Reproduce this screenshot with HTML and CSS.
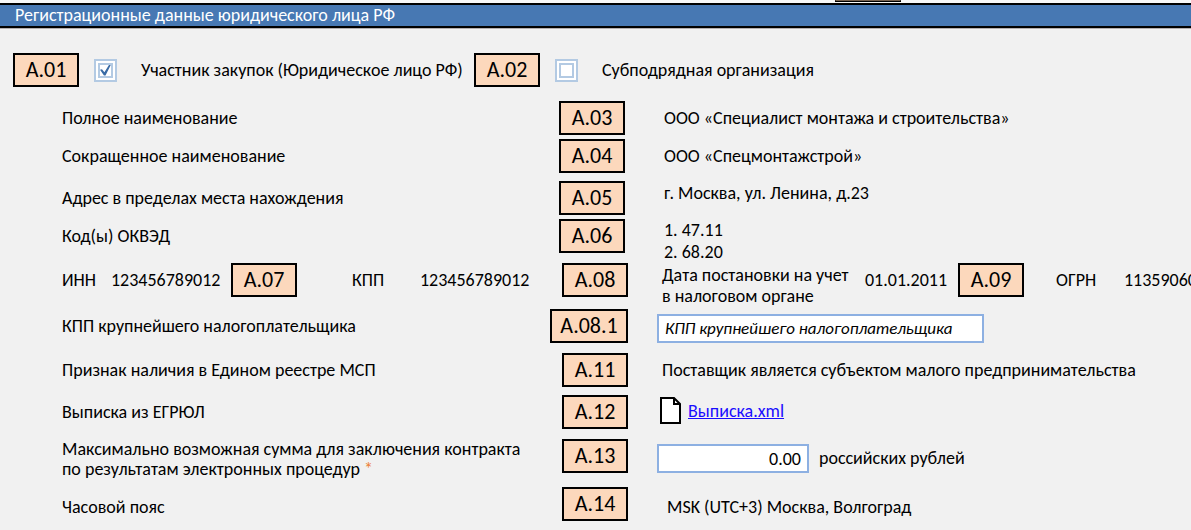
FILE: index.html
```html
<!DOCTYPE html>
<html lang="ru">
<head>
<meta charset="utf-8">
<title>Регистрационные данные юридического лица РФ</title>
<link rel="stylesheet" href="styles.css">
</head>
<body>
<div class="strip"><span class="strip-box"></span></div>
<h1 class="bar">Регистрационные данные юридического лица РФ</h1>
<main class="form">
  <div class="roles">
    <span class="badge">А.01</span>
    <span class="tick"><input type="checkbox" id="buyer" checked></span>
    <label class="role-first" for="buyer">Участник закупок (Юридическое лицо РФ)</label>
    <span class="badge">А.02</span>
    <span class="tick"><input type="checkbox" id="sub"></span>
    <label for="sub">Субподрядная организация</label>
  </div>

  <section class="group names">
    <div class="row">
      <span>Полное наименование</span>
      <span class="badge">А.03</span>
      <span>ООО «Специалист монтажа и строительства»</span>
    </div>
    <div class="row gap-s">
      <span>Сокращенное наименование</span>
      <span class="badge">А.04</span>
      <span>ООО «Спецмонтажстрой»</span>
    </div>
    <div class="row gap-m">
      <span>Адрес в пределах места нахождения</span>
      <span class="badge">А.05</span>
      <span class="address">г. Москва, ул. Ленина, д.23</span>
    </div>
    <div class="row gap-s">
      <span>Код(ы) ОКВЭД</span>
      <span class="badge">А.06</span>
      <span class="lines">1. 47.11<br>2. 68.20</span>
    </div>
  </section>

  <section class="group tax">
    <div class="row">
      <div class="codes">
        <span>ИНН</span><span>123456789012</span><span class="badge">А.07</span><span>КПП</span><span>123456789012</span>
      </div>
      <span class="badge">А.08</span>
      <div class="dates">
        <span class="date-label">Дата постановки на учет<br>в налоговом органе</span><span>01.01.2011</span><span class="badge">А.09</span><span>ОГРН</span><span>113590600</span>
      </div>
    </div>
    <div class="row gap-xs">
      <label for="kpp">КПП крупнейшего налогоплательщика</label>
      <span class="badge badge-wide">А.08.1</span>
      <span class="field"><input class="box box-kpp" id="kpp" type="text" value="КПП крупнейшего налогоплательщика"></span>
    </div>
    <div class="row gap-l">
      <span>Признак наличия в Едином реестре МСП</span>
      <span class="badge">А.11</span>
      <span>Поставщик является субъектом малого предпринимательства</span>
    </div>
    <div class="row gap-m">
      <span>Выписка из ЕГРЮЛ</span>
      <span class="badge">А.12</span>
      <span class="file">
        <svg width="21" height="27" viewBox="0 0 21 27" aria-hidden="true"><path d="M1 1H14L20 7V26H1Z" fill="#fff" stroke="#000" stroke-width="2"/><path d="M14 1V7H20" fill="none" stroke="#000" stroke-width="2"/></svg>
        <a href="#">Выписка.xml</a>
      </span>
    </div>
    <div class="row gap-l">
      <label class="sum-label" for="sum">Максимально возможная сумма для заключения контракта<br>по результатам электронных процедур <span class="star">*</span></label>
      <span class="badge">А.13</span>
      <span class="field"><input class="box box-sum" id="sum" type="text" value="0.00"><span>российских рублей</span></span>
    </div>
    <div class="row gap-m zone">
      <span>Часовой пояс</span>
      <span class="badge">А.14</span>
      <span>MSK (UTC+3) Москва, Волгоград</span>
    </div>
  </section>
</main>
</body>
</html>
```
FILE: styles.css
```css
* { box-sizing: border-box; }

body {
  margin: 0;
  background: #f1f1f1;
  color: #000;
  font: 18px/34px Carlito, Lato, "Noto Sans", sans-serif;
  white-space: nowrap;
  overflow-x: hidden;
}

.strip {
  height: 3px;
  padding-left: 835px;
  background: #f8f8f8;
}

.strip-box {
  display: block;
  width: 66px;
  height: 2px;
  border: 1px solid #000;
  border-top-color: #75604e;
}

.bar {
  margin: 0;
  padding-left: 15px;
  border: solid #000;
  border-width: 2px 0;
  box-shadow: 0 1px #b5b0b0;
  background: #4778b3;
  color: #fff;
  font-size: 18px;
  font-weight: 400;
  line-height: 21px;
}

.form { padding: 25px 0 0; }

.badge {
  flex: none;
  width: 66px;
  height: 34px;
  border: 2px solid #000;
  background: #fcd8bc;
  font-size: 22px;
  line-height: 30px;
  text-align: center;
}

.badge-wide { width: 78px; }

.roles {
  display: flex;
  align-items: center;
  padding-left: 13px;
}

.tick {
  display: flex;
  margin: 0 24px 0 15px;
  padding: 2px;
  border: 2px solid #b3cae3;
  background: #fff;
}

.role-first { width: 333px; }

.tick input {
  appearance: none;
  width: 15px;
  height: 15px;
  margin: 0;
  border: 2px solid #b3cae3;
  background: #fff;
}

.tick input:checked::before {
  content: "";
  display: block;
  width: 11px;
  height: 11px;
  background: #396ba5;
  clip-path: polygon(0 48%, 18% 44%, 40% 70%, 84% 0, 100% 0, 50% 100%, 36% 100%);
}

.group { padding-left: 62px; }

.names { padding-top: 14px; }

.row {
  display: grid;
  align-items: start;
}

.names .row { grid-template-columns: 497px 66px 1fr; }
.names .row > :last-child { padding-left: 39px; }

.tax .row { grid-template-columns: 488px 78px 1fr; }
.tax .badge { justify-self: end; }
.tax .row > :last-child { padding-left: 34px; }

.gap-xs { margin-top: 2px; }
.gap-s { margin-top: 4px; }
.gap-m { margin-top: 8px; }
.gap-l { margin-top: 10px; }

.address { line-height: 24px; }
.lines { line-height: 22px; }
.sum-label { line-height: 20px; }

.date-label {
  padding-top: 2px;
  line-height: 21px;
}

.codes { display: grid; grid-template-columns: 49px 120px 121px 68px 1fr; }
.dates { display: grid; grid-template-columns: 203px 93px 98px 68px 1fr; }
.codes .badge, .dates .badge { justify-self: start; }

.field {
  display: flex;
  align-items: center;
  gap: 10px;
  padding-top: 5px;
  line-height: 29px;
}

.tax .row > .field { padding-left: 29px; }

.box {
  height: 29px;
  padding: 0 6px;
  border: 2px solid #8db0e2;
  border-radius: 0;
  background: #fff;
  color: #000;
  font: inherit;
  line-height: 25px;
}

.box-kpp {
  width: 327px;
  font-size: 17px;
  font-style: italic;
}

.box-sum {
  width: 152px;
  text-align: right;
}

.file {
  display: flex;
  align-items: center;
  gap: 7px;
  height: 31px;
}

.tax .row > .file { padding-left: 32px; }

.file a { color: #1a0dff; }

.star { color: #ed7d31; }

.zone { line-height: 40px; }

.tax .zone > :last-child { padding-left: 39px; }
```
